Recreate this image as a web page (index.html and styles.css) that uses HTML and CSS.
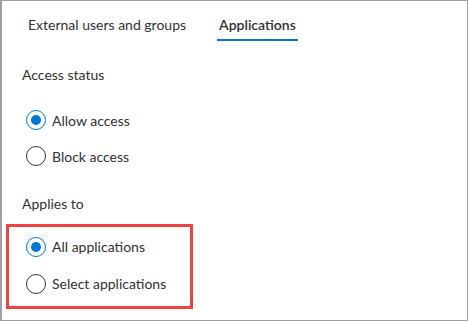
FILE: index.html
```html
<!doctype html>
<html>
<head>
	<meta charset="utf-8">
	<title>Cross-tenant access settings</title>
	<link rel="stylesheet" href="styles.css">
</head>
<body>
	<div class="panel">
		<div class="tabs">
			<span class="tab">External users and groups</span>
			<span class="tab tab-active">Applications</span>
		</div>
		<div class="content">
			<div class="section-label label-access">Access status</div>
			<label class="option">
				<span class="radio radio-checked"></span>
				Allow access
			</label>
			<label class="option">
				<span class="radio"></span>
				Block access
			</label>

			<div class="section-label label-applies">Applies to</div>
			<div class="highlight">
				<label class="option">
					<span class="radio radio-checked"></span>
					All applications
				</label>
				<label class="option">
					<span class="radio"></span>
					Select applications
				</label>
			</div>
		</div>
	</div>
</body>
</html>
```

FILE: styles.css
```css
	html, body {
		margin: 0;
		padding: 0;
		background: #fff;
	}
	body {
		font-family: "Lato", "Open Sans", Arial, sans-serif;
		font-size: 14px;
		color: #323130;
	}
	.panel {
		box-sizing: border-box;
		width: 468px;
		height: 321px;
		border: 1px solid #a0a0a0;
		border-left-width: 2px;
	}
	.tabs {
		display: flex;
		gap: 29px;
		padding-left: 24px;
	}
	.tab {
		line-height: 20px;
		padding: 14px 2px 4px;
		border-bottom: 2px solid transparent;
	}
	.tab-active {
		font-weight: 600;
		border-bottom-color: #0078d4;
	}
	.content {
		padding-left: 20px;
	}
	.section-label {
		line-height: 20px;
	}
	.label-access {
		margin-top: 24px;
		margin-bottom: 17px;
	}
	.label-applies {
		margin-top: 20px;
		margin-bottom: 10px;
	}
	.option {
		display: flex;
		align-items: center;
		height: 36px;
		padding-left: 4px;
		cursor: pointer;
	}
	.radio {
		box-sizing: border-box;
		width: 20px;
		height: 20px;
		margin-right: 6px;
		border: 1px solid #323130;
		border-radius: 50%;
		display: flex;
		align-items: center;
		justify-content: center;
	}
	.radio-checked {
		border-color: #0078d4;
	}
	.radio-checked::after {
		content: "";
		width: 10px;
		height: 10px;
		border-radius: 50%;
		background: #0078d4;
	}
	.highlight {
		width: 187px;
		box-sizing: border-box;
		margin-left: -16px;
		padding: 1px 0 4px 13px;
		border: 3px solid #f24141;
	}
	.highlight .option {
		height: 37px;
	}
```
